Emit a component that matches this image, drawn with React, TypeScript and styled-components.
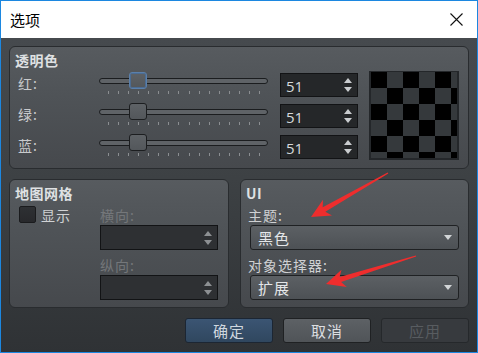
import React from 'react';
import styled, { createGlobalStyle } from 'styled-components';

const GlobalStyle = createGlobalStyle`
  html, body {
    margin: 0;
    padding: 0;
    background: #ffffff;
  }
  * {
    box-sizing: border-box;
  }
`;

const CJK = `"Noto Sans CJK SC", "Noto Sans", sans-serif`;

const TICKS = Array.from({ length: 16 }, (_, i) => i);

const arrowPoints = (x1: number, y1: number, x2: number, y2: number) => {
  const dx = x2 - x1;
  const dy = y2 - y1;
  const len = Math.hypot(dx, dy);
  const ux = dx / len;
  const uy = dy / len;
  const nx = -uy;
  const ny = ux;
  const at = (back: number, side: number) =>
    `${(x2 - ux * back + nx * side).toFixed(1)},${(y2 - uy * back + ny * side).toFixed(1)}`;
  return [
    at(len, 0.6),
    at(15, 2.6),
    at(19, 9),
    at(0, 0),
    at(19, -9),
    at(15, -2.6),
    at(len, -0.6),
  ].join(' ');
};

const Slider = ({ value, focused }: { value: number; focused?: boolean }) => {
  const left = Math.round((value / 255) * 151);
  return (
    <SliderBox>
      <Groove />
      <Handle $focused={focused} style={{ left }} />
      <TickRow>
        {TICKS.map((t) => (
          <Tick key={t} />
        ))}
      </TickRow>
    </SliderBox>
  );
};

const SpinArrows = ({ dim }: { dim?: boolean }) => (
  <ArrowCol>
    <svg width="8" height="5" viewBox="0 0 8 5">
      <polygon points="0,5 4,0 8,5" fill={dim ? '#8d9093' : '#c9cccf'} />
    </svg>
    <svg width="8" height="5" viewBox="0 0 8 5">
      <polygon points="0,0 8,0 4,5" fill={dim ? '#8d9093' : '#c9cccf'} />
    </svg>
  </ArrowCol>
);

const ColorRow = ({ label, focused }: { label: string; focused?: boolean }) => (
  <Row>
    <RowLabel>{label}</RowLabel>
    <Slider value={51} focused={focused} />
    <SpinBox>
      <SpinText>51</SpinText>
      <SpinArrows />
    </SpinBox>
  </Row>
);

const Combo = ({ text }: { text: string }) => (
  <ComboBox>
    <span>{text}</span>
    <svg width="8" height="5" viewBox="0 0 8 5">
      <polygon points="0,0 8,0 4,5" fill="#d2d5d7" />
    </svg>
  </ComboBox>
);

export default function App() {
  return (
    <>
      <GlobalStyle />
      <Window>
        <TitleBar>
          <TitleText>选项</TitleText>
          <svg width="13" height="13" viewBox="0 0 13 13">
            <path d="M0.5 0.5 L12.5 12.5 M12.5 0.5 L0.5 12.5" stroke="#111" strokeWidth="1.1" />
          </svg>
        </TitleBar>
        <Body>
          <Group>
            <GroupTitle>透明色</GroupTitle>
            <ColorSection>
              <Rows>
                <ColorRow label="红:" focused />
                <ColorRow label="绿:" />
                <ColorRow label="蓝:" />
              </Rows>
              <Checker />
            </ColorSection>
          </Group>
          <GroupRow>
            <Group>
              <GroupTitle>地图网格</GroupTitle>
              <GridSection>
                <CheckRow>
                  <CheckBox />
                  <CheckLabel>显示</CheckLabel>
                </CheckRow>
                <FieldCol>
                  <FieldLabel $dim>横向:</FieldLabel>
                  <SpinBox $disabled>
                    <SpinText />
                    <SpinArrows dim />
                  </SpinBox>
                  <FieldLabel $dim>纵向:</FieldLabel>
                  <SpinBox $disabled>
                    <SpinText />
                    <SpinArrows dim />
                  </SpinBox>
                </FieldCol>
              </GridSection>
            </Group>
            <Group>
              <GroupTitle>UI</GroupTitle>
              <UiSection>
                <FieldLabel>主题:</FieldLabel>
                <Combo text="黑色" />
                <FieldLabel>对象选择器:</FieldLabel>
                <Combo text="扩展" />
              </UiSection>
            </Group>
          </GroupRow>
          <ButtonBar>
            <Button $kind="primary">确定</Button>
            <Button>取消</Button>
            <Button $kind="disabled">应用</Button>
          </ButtonBar>
        </Body>
        <Marks width="478" height="353" viewBox="0 0 478 353">
          <polygon points={arrowPoints(388, 173, 311, 217)} fill="#ef2d2d" />
          <polygon points={arrowPoints(416, 256, 326, 284)} fill="#ef2d2d" />
        </Marks>
      </Window>
    </>
  );
}

const Window = styled.div`
  position: relative;
  width: 478px;
  height: 353px;
  border: 1px solid #1c87e0;
  display: flex;
  flex-direction: column;
  font-family: ${CJK};
  overflow: hidden;
`;

const TitleBar = styled.div`
  height: 37px;
  flex: none;
  background: #ffffff;
  display: flex;
  align-items: center;
  justify-content: space-between;
  padding: 0 14px 0 9px;
`;

const TitleText = styled.div`
  font-size: 15px;
  color: #000;
  margin-top: -1px;
`;

const Body = styled.div`
  flex: 1;
  display: flex;
  flex-direction: column;
  gap: 10px;
  padding: 8px 8px 9px 8px;
  background: linear-gradient(#464a4e 0%, #3d4144 45%, #2f3235 100%);
`;

const Group = styled.div`
  flex: 1;
  border: 1px solid #292c2f;
  border-radius: 6px;
  background: linear-gradient(#575b5f 0%, #4f5357 40%, #46494d 100%);
  display: flex;
  flex-direction: column;
  min-height: 123px;
`;

const GroupTitle = styled.div`
  margin: 3px 0 0 5px;
  height: 20px;
  line-height: 20px;
  font-size: 14px;
  font-weight: 700;
  letter-spacing: 0.5px;
  color: #dfe1e3;
`;

const ColorSection = styled.div`
  display: flex;
  align-items: flex-start;
  margin-top: 2px;
`;

const Rows = styled.div`
  display: flex;
  flex-direction: column;
  gap: 7px;
  margin-top: 1px;
  padding-left: 8px;
`;

const Row = styled.div`
  display: flex;
  align-items: flex-start;
  height: 24px;
`;

const RowLabel = styled.div`
  width: 81px;
  height: 20px;
  line-height: 20px;
  font-size: 14px;
  letter-spacing: 1px;
  color: #c8cacc;
`;

const SliderBox = styled.div`
  position: relative;
  width: 169px;
  height: 24px;
  margin-right: 12px;
`;

const Groove = styled.div`
  position: absolute;
  left: 0;
  right: 0;
  top: 5px;
  height: 6px;
  border: 1px solid #1b1d1f;
  border-radius: 3px;
  background: #5f6367;
`;

const Handle = styled.div<{ $focused?: boolean }>`
  position: absolute;
  top: -1px;
  width: 18px;
  height: 17px;
  border-radius: 3px;
  border: 1px solid ${(p) => (p.$focused ? '#5b80ab' : '#1c1e20')};
  box-shadow: ${(p) => (p.$focused ? 'inset 0 0 0 1px #4b6c93' : 'none')};
  background: linear-gradient(#5e6266, #53575b);
`;

const TickRow = styled.div`
  position: absolute;
  left: 9px;
  width: 152px;
  top: 18px;
  display: flex;
  justify-content: space-between;
`;

const Tick = styled.div`
  width: 1px;
  height: 3px;
  background: #8b8e91;
`;

const SpinBox = styled.div<{ $disabled?: boolean }>`
  width: ${(p) => (p.$disabled ? '118px' : '78px')};
  height: ${(p) => (p.$disabled ? '25px' : '24px')};
  border: 1px solid #121315;
  background: ${(p) => (p.$disabled ? '#2e3033' : '#252729')};
  display: flex;
  align-items: center;
  justify-content: space-between;
  padding: 0 5px 0 5px;
`;

const SpinText = styled.span`
  font-family: "Open Sans", "Noto Sans", sans-serif;
  font-size: 15px;
  color: #d6d9db;
  margin-top: 1px;
`;

const ArrowCol = styled.div`
  display: flex;
  flex-direction: column;
  gap: 4px;
`;

const Checker = styled.div`
  width: 90px;
  height: 89px;
  margin-left: 11px;
  margin-top: -1px;
  border: 2px solid #24272a;
  border-width: 1px 2px 2px 2px;
  background: repeating-conic-gradient(#35393c 0 25%, #000 0 50%) 0 0 / 32px 32px;
`;

const GroupRow = styled.div`
  display: flex;
  gap: 11px;
  height: 129px;

  & > ${Group}:first-child {
    flex: 0 0 220px;
  }
`;

const GridSection = styled.div`
  display: flex;
  padding-left: 9px;
`;

const CheckRow = styled.div`
  display: flex;
  align-items: center;
  gap: 5px;
  height: 17px;
  margin-top: 3px;
  width: 81px;
`;

const CheckBox = styled.div`
  width: 17px;
  height: 17px;
  border: 1px solid #1a1b1d;
  border-radius: 2px;
  background: linear-gradient(#2e3033, #28292c);
`;

const CheckLabel = styled.span`
  font-size: 14px;
  letter-spacing: 1px;
  color: #d0d2d4;
`;

const FieldCol = styled.div`
  display: flex;
  flex-direction: column;
  margin-top: 2px;
`;

const FieldLabel = styled.div<{ $dim?: boolean }>`
  height: 20px;
  line-height: 20px;
  font-size: 14px;
  letter-spacing: 1px;
  color: ${(p) => (p.$dim ? '#74777a' : '#cfd1d3')};

  & + div + & {
    margin-top: 5px;
  }
`;

const UiSection = styled.div`
  display: flex;
  flex-direction: column;
  padding: 2px 9px 0 7px;
`;

const ComboBox = styled.div`
  height: 25px;
  margin-left: 2px;
  border: 1px solid #1f2123;
  border-radius: 3px;
  background: linear-gradient(#5c6064, #4d5155);
  display: flex;
  align-items: center;
  justify-content: space-between;
  padding: 0 6px 0 7px;
  font-size: 15px;
  color: #e4e6e8;
  letter-spacing: 1px;

  & + div {
    margin-top: 5px;
  }
`;

const ButtonBar = styled.div`
  display: flex;
  justify-content: flex-end;
  gap: 10px;
`;

const Button = styled.div<{ $kind?: 'primary' | 'disabled' }>`
  width: 88px;
  height: 25px;
  border-radius: 3px;
  display: flex;
  align-items: center;
  justify-content: center;
  font-size: 15px;
  letter-spacing: 1px;
  border: 1px solid
    ${(p) => (p.$kind === 'primary' ? '#1c2633' : p.$kind === 'disabled' ? '#25282b' : '#1f2123')};
  background: ${(p) =>
    p.$kind === 'primary'
      ? 'linear-gradient(#3b5573, #30475f)'
      : p.$kind === 'disabled'
        ? '#373a3e'
        : 'linear-gradient(#5d6165, #505458)'};
  color: ${(p) => (p.$kind === 'primary' ? '#cfd7df' : p.$kind === 'disabled' ? '#585c60' : '#dcdee0')};
`;

const Marks = styled.svg`
  position: absolute;
  left: -1px;
  top: -1px;
  pointer-events: none;
`;
